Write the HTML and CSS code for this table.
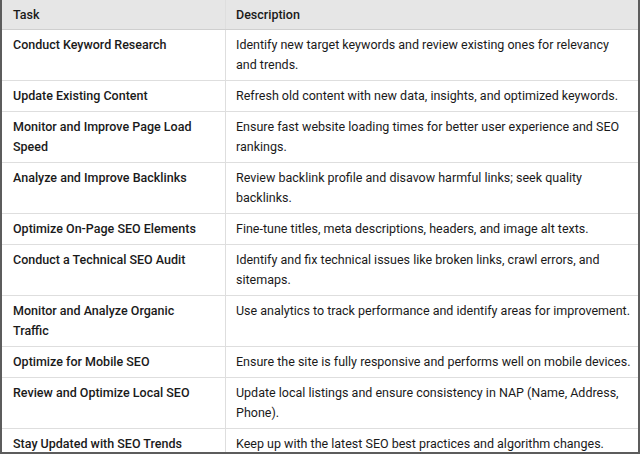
FILE: index.html
```html
<!DOCTYPE html>
<html>
<head>
<meta charset="utf-8">
<link rel="stylesheet" href="styles.css">
</head>
<body>
<div class="frame">
<table class="seo">
<thead>
<tr><th class="task">Task</th><th class="desc">Description</th></tr>
</thead>
<tbody>
<tr><td class="task">Conduct Keyword Research</td><td class="desc">Identify new target keywords and review existing ones for relevancy and&nbsp;trends.</td></tr>
<tr><td class="task">Update Existing Content</td><td class="desc">Refresh old content with new data, insights, and optimized keywords.</td></tr>
<tr><td class="task">Monitor and Improve Page Load Speed</td><td class="desc">Ensure fast website loading times for better user experience and SEO rankings.</td></tr>
<tr><td class="task">Analyze and Improve Backlinks</td><td class="desc">Review backlink profile and disavow harmful links; seek quality backlinks.</td></tr>
<tr><td class="task">Optimize On-Page SEO Elements</td><td class="desc">Fine-tune titles, meta descriptions, headers, and image alt texts.</td></tr>
<tr><td class="task">Conduct a Technical SEO Audit</td><td class="desc">Identify and fix technical issues like broken links, crawl errors, and sitemaps.</td></tr>
<tr><td class="task">Monitor and Analyze Organic Traffic</td><td class="desc">Use analytics to track performance and identify areas for improvement.</td></tr>
<tr><td class="task">Optimize for Mobile SEO</td><td class="desc">Ensure the site is fully responsive and performs well on mobile devices.</td></tr>
<tr><td class="task">Review and Optimize Local SEO</td><td class="desc">Update local listings and ensure consistency in NAP (Name, Address, Phone).</td></tr>
<tr><td class="task">Stay Updated with SEO Trends</td><td class="desc">Keep up with the latest SEO best practices and algorithm changes.</td></tr>
</tbody>
</table>
</div>
</body>
</html>
```
FILE: styles.css
```css
html, body {
  margin: 0;
  padding: 0;
  background: #ffffff;
}
.frame {
  width: 640px;
  height: 454px;
  box-sizing: border-box;
  border-left: 2px solid #5c5c5c;
  border-right: 2px solid #5c5c5c;
  border-bottom: 2px solid #5c5c5c;
  overflow: hidden;
}
.seo {
  width: 100%;
  border-collapse: collapse;
  font-family: Roboto, "Noto Sans", sans-serif;
  font-size: 12.5px;
  line-height: 20px;
  color: #1a1a1a;
  table-layout: fixed;
}
.seo th, .seo td {
  text-align: left;
  vertical-align: top;
  padding-top: 5px;
  padding-bottom: 5px;
  border-bottom: 1px solid #dedede;
  border-left: 1px solid #dedede;
}
.seo .task {
  width: 198px;
  padding-left: 11px;
  padding-right: 14px;
  border-left: none;
}
.seo .desc {
  padding-left: 10px;
  padding-right: 2px;
}
.seo th {
  background: #e6e6e6;
  font-weight: 500;
  padding-bottom: 4px;
  border-bottom-color: #cfcfcf;
}
.seo td.task {
  font-weight: 500;
}
```
